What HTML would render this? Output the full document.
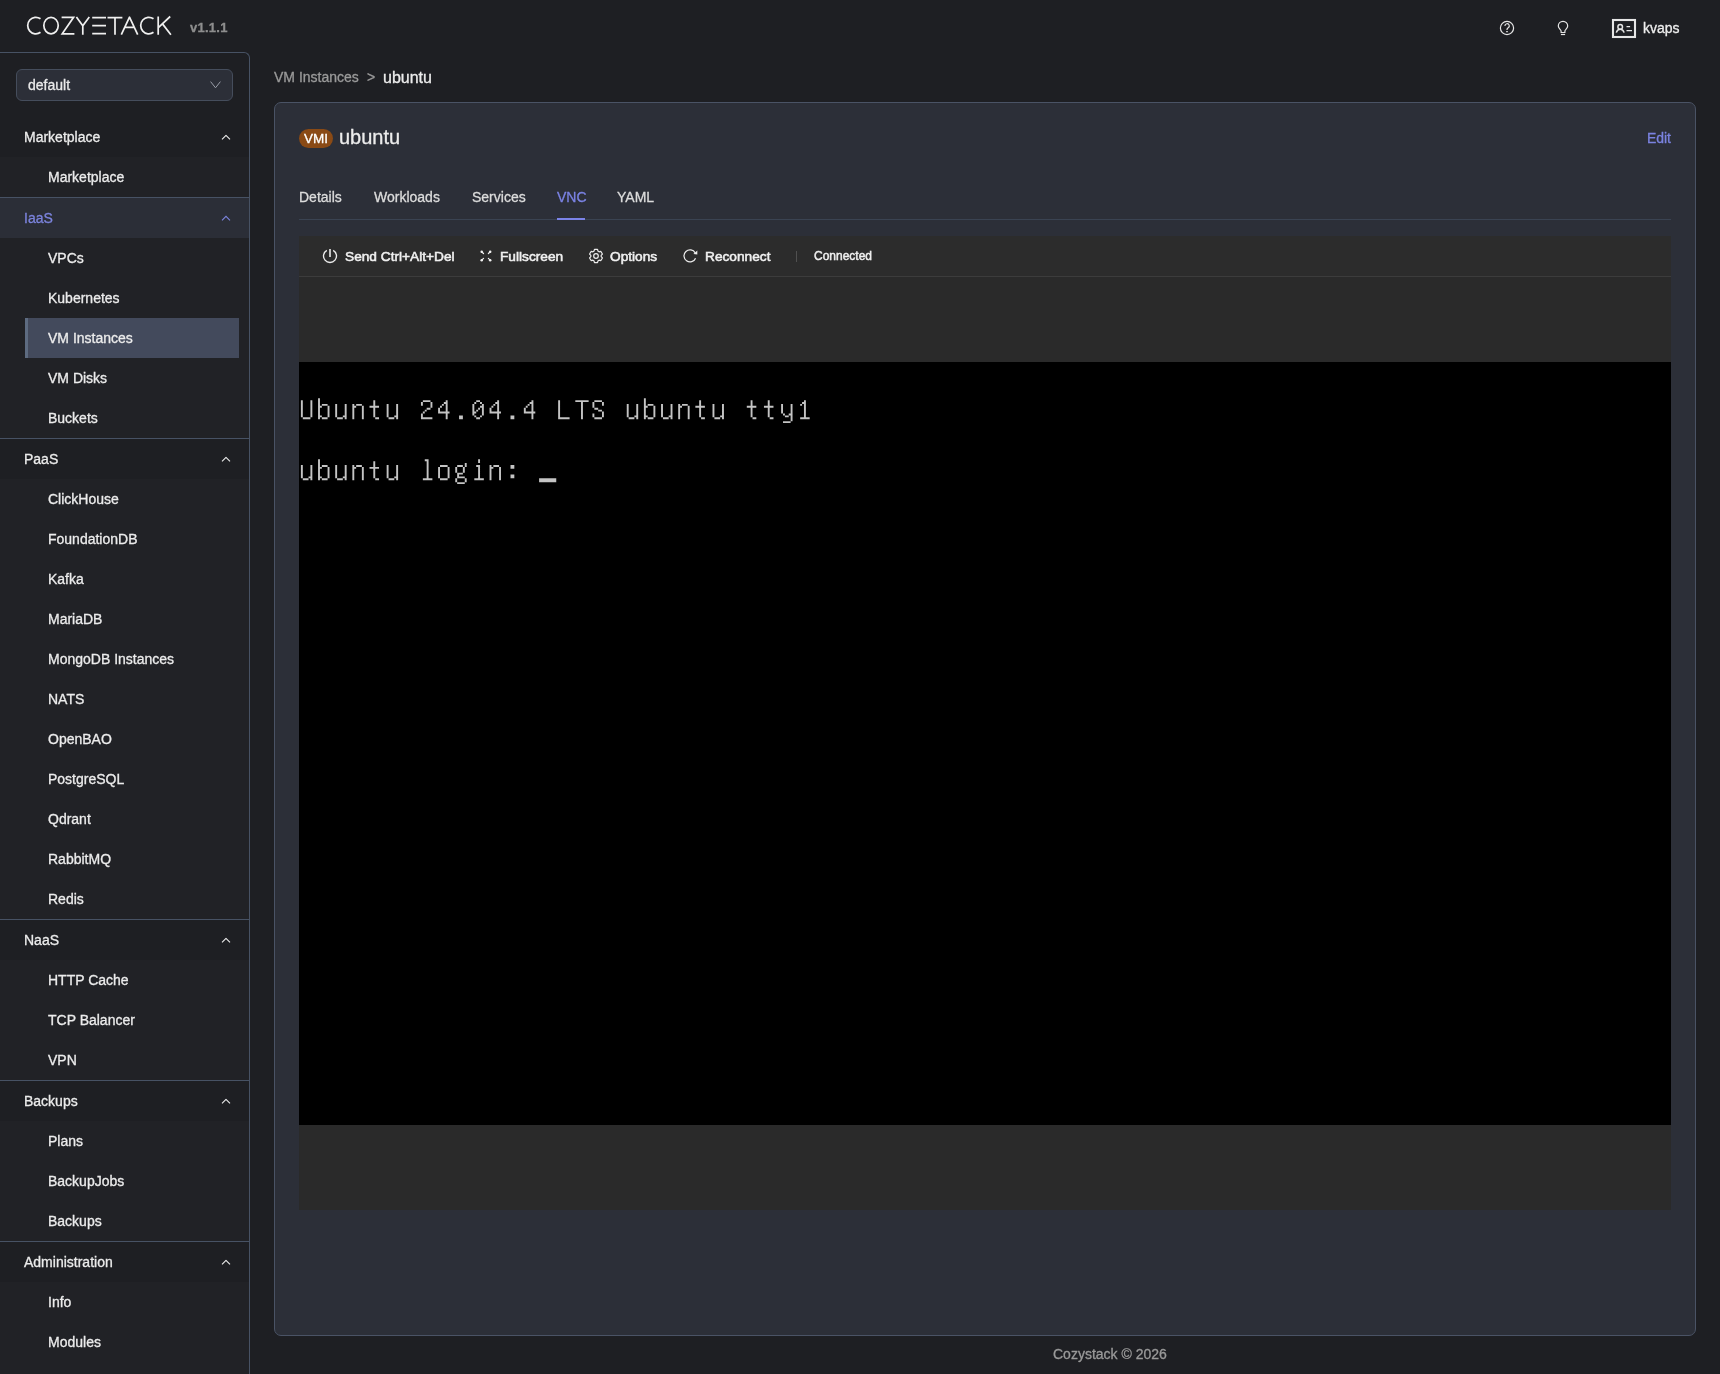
<!DOCTYPE html>
<html><head><meta charset="utf-8">
<style>
*{box-sizing:border-box;margin:0;padding:0}
html,body{width:1720px;height:1374px;overflow:hidden;background:#1e1f23;font-family:"Liberation Sans",sans-serif;color:#e8e8e8}
body{will-change:transform;-webkit-text-stroke-width:0.3px}
.abs{position:absolute}
#logo{position:absolute;left:20px;top:10px}
#ver{position:absolute;left:190px;top:19.7px;font-size:13px;font-weight:bold;color:#8e8e8e;letter-spacing:0.25px}
#nav{position:absolute;left:0;top:64px;width:249px}
#sidebar{position:absolute;left:0;top:52px;width:250px;height:1340px;border-top:1px solid #475264;border-right:1px solid #475264;border-top-right-radius:6px;background:#1e1f23;overflow:hidden}
#sel{position:absolute;left:16px;top:16px;width:217px;height:32px;border:1px solid #454d5c;border-radius:6px;background:#2c2f38;font-size:14px;color:#eaeaea;padding-left:11px;line-height:30px}
#sel svg{position:absolute;right:11px;top:11px}
.sec{position:absolute;left:0;width:249px}
.hdr{height:40px;position:relative;font-size:14px;color:#ececec;line-height:40px;padding-left:24px;background:#1e1f23}
.hdr svg{position:absolute;left:221px;top:17px}
.hdr.on{background:#2b2e37;color:#7b83dc}
.items{background:#212226}
.it{height:40px;line-height:40px;font-size:14px;color:#ececec;padding-left:48px;position:relative}
.it.on{background:#434a5c;margin-left:25px;margin-right:10px;padding-left:20px;border-left:3px solid #5d6b80}
.bt{border-top:1px solid #475264}
#crumb{position:absolute;left:274px;top:68.6px;font-size:14px;color:#9a9a9a}
#crumb .gt{position:absolute;left:93px;top:0}
#crumb .cur{position:absolute;left:109px;top:0px;font-size:16px;color:#ececec}
#card{position:absolute;left:274px;top:102px;width:1422px;height:1234px;background:#2c2f38;border:1px solid #4a5365;border-radius:7px}
#badge{position:absolute;left:24px;top:26px;width:34px;height:19px;border-radius:10px;background:#8a4a15;color:#fff;font-size:13.5px;line-height:19px;text-align:center}
#title{position:absolute;left:64px;top:23px;font-size:20px;color:#ececec}
#edit{position:absolute;right:24px;top:27px;font-size:14px;color:#7b83e0}
#tabs{position:absolute;left:24px;top:116px;width:1372px;height:1px;background:#3a4352}
.tab{position:absolute;top:-30px;font-size:14px;color:#dcdcdc}
.tab.on{color:#7b83e4}
.tab.on::after{content:"";position:absolute;left:0;width:28px;top:29px;height:2px;background:#7b83e8}
#vnc{position:absolute;left:24px;top:133px;width:1372px;height:974px;background:#2a2a2a}
#tb{position:absolute;left:0;top:0;width:1372px;height:41px;border-bottom:1px solid #3c3c3c;background:#2c2c2c}
.tbi{position:absolute;top:1px;height:40px;line-height:40px;font-size:13.7px;color:#f0f0f0;-webkit-text-stroke-width:0.55px}
.tbi svg{position:absolute;top:12px}
#term{position:absolute;left:0;top:126px;width:1372px;height:763px;background:#000;overflow:hidden}
.tl{position:absolute;left:0;font-family:"Liberation Mono",monospace;font-size:28.6px;color:#d0d0d0;white-space:pre;transform-origin:0 0}
#footer{position:absolute;left:1053px;top:1346px;font-size:14px;color:#9a9a9a}
#hdr-r{position:absolute;top:0;right:0}
</style></head><body>

<svg id="logo" width="160" height="30" viewBox="20 10 160 30" fill="none" stroke="#f0f0f0" stroke-width="1.72">
<path d="M40.5 18.8A8.1 8.28 0 1 0 40.5 32.3"/>
<ellipse cx="51.03" cy="25.55" rx="7.2" ry="8.28"/>
<path d="M61.6 17.3H73.6L62.2 33.8H74.4"/>
<path d="M76.4 17L82.8 25.8L89.3 17M82.8 25.8V34.7"/>
<path d="M92.2 17.66H106M92.2 25.7H106M92.2 33.6H106"/>
<path d="M107.5 17.66H122.4M115 17.66V34.7"/>
<path stroke-linejoin="round" d="M121.3 34.7L129.5 17.2L137.7 34.7M124.65 27.3H134.35"/>
<path d="M153.5 18.8A8.1 8.28 0 1 0 153.5 32.3"/>
<path d="M158.2 16.4V34.7M170.2 16.5L158.6 27.4M162.5 23.9L170.9 34.7"/>
</svg>
<div id="ver">v1.1.1</div>

<!-- header right -->
<svg class="abs" style="left:1490px;top:10px" width="150" height="36" viewBox="1490 10 150 36" fill="none" stroke="#e6e6e6">
<circle cx="1507" cy="28" r="6.6" stroke-width="1.2"/>
<path d="M1504.9 25.9a2.2 2.2 0 1 1 3.3 1.9c-.6.4-1.2.8-1.2 1.8v.3" stroke-width="1.2"/>
<path d="M1506.2 31.6h1.6" stroke-width="1.1"/>
<path d="M1561.1 32.5v-1.5c0-1.2-2.8-2.6-2.8-5a4.7 4.7 0 0 1 9.4 0c0 2.4-2.8 3.8-2.8 5v1.5z" stroke-width="1.2"/>
<path d="M1560.9 34.5h4.2" stroke-width="1.2"/>
<rect x="1613" y="20" width="22" height="17" stroke-width="2.1"/>
<circle cx="1620.2" cy="26.9" r="2.3" stroke-width="1.5"/>
<path d="M1616.3 32.6c.6-2.2 2-3.3 3.9-3.3s3.3 1.1 3.9 3.3" stroke-width="1.5"/>
<path d="M1626.5 26.6h3.6M1626.5 30.6h5.5" stroke-width="1.4"/>
</svg>
<div class="abs" style="left:1643px;top:20px;font-size:14px;color:#eeeeee">kvaps</div>

<div id="sidebar">
  <div id="sel">default<svg width="11" height="8" viewBox="0 0 11 8" fill="none" stroke="#9a9ea8" stroke-width="1"><path d="M.6 .6l4.9 6.2 4.9-6.2"/></svg></div>
  <div id="nav">
<div class="sec2">
<div class="hdr">Marketplace<svg width="10" height="7" viewBox="0 0 10 7" fill="none" stroke-width="1.1" stroke-linejoin="round" stroke="#ececec"><path d="M1 5.3l4-4 4 4"/></svg></div>
<div class="items">
<div class="it">Marketplace</div>
</div></div>
<div class="sec2 bt">
<div class="hdr on">IaaS<svg width="10" height="7" viewBox="0 0 10 7" fill="none" stroke-width="1.1" stroke="#7b83dc"><path d="M1 5.3l4-4 4 4"/></svg></div>
<div class="items">
<div class="it">VPCs</div>
<div class="it">Kubernetes</div>
<div class="it on">VM Instances</div>
<div class="it">VM Disks</div>
<div class="it">Buckets</div>
</div></div>
<div class="sec2 bt">
<div class="hdr">PaaS<svg width="10" height="7" viewBox="0 0 10 7" fill="none" stroke-width="1.1" stroke-linejoin="round" stroke="#ececec"><path d="M1 5.3l4-4 4 4"/></svg></div>
<div class="items">
<div class="it">ClickHouse</div>
<div class="it">FoundationDB</div>
<div class="it">Kafka</div>
<div class="it">MariaDB</div>
<div class="it">MongoDB Instances</div>
<div class="it">NATS</div>
<div class="it">OpenBAO</div>
<div class="it">PostgreSQL</div>
<div class="it">Qdrant</div>
<div class="it">RabbitMQ</div>
<div class="it">Redis</div>
</div></div>
<div class="sec2 bt">
<div class="hdr">NaaS<svg width="10" height="7" viewBox="0 0 10 7" fill="none" stroke-width="1.1" stroke-linejoin="round" stroke="#ececec"><path d="M1 5.3l4-4 4 4"/></svg></div>
<div class="items">
<div class="it">HTTP Cache</div>
<div class="it">TCP Balancer</div>
<div class="it">VPN</div>
</div></div>
<div class="sec2 bt">
<div class="hdr">Backups<svg width="10" height="7" viewBox="0 0 10 7" fill="none" stroke-width="1.1" stroke-linejoin="round" stroke="#ececec"><path d="M1 5.3l4-4 4 4"/></svg></div>
<div class="items">
<div class="it">Plans</div>
<div class="it">BackupJobs</div>
<div class="it">Backups</div>
</div></div>
<div class="sec2 bt">
<div class="hdr">Administration<svg width="10" height="7" viewBox="0 0 10 7" fill="none" stroke-width="1.1" stroke-linejoin="round" stroke="#ececec"><path d="M1 5.3l4-4 4 4"/></svg></div>
<div class="items">
<div class="it">Info</div>
<div class="it">Modules</div><div class="it"></div>
</div></div>
</div>
</div>

<div id="crumb">VM Instances<span class="gt">&gt;</span><span class="cur">ubuntu</span></div>

<div id="card">
  <div id="badge">VMI</div>
  <div id="title">ubuntu</div>
  <div id="edit">Edit</div>
  <div id="tabs">
    <span class="tab" style="left:0">Details</span>
    <span class="tab" style="left:75px">Workloads</span>
    <span class="tab" style="left:173px">Services</span>
    <span class="tab on" style="left:258px">VNC</span>
    <span class="tab" style="left:318px">YAML</span>
  </div>
  <div id="vnc">
    <div id="tb">
  <svg class="abs" style="left:17px;top:7px" width="28" height="24" viewBox="316 243 28 24" fill="none" stroke="#ececec" stroke-width="1.35"><path d="M326.8 250.3A6.5 6.5 0 1 0 333.2 250.3"/><rect x="329" y="249" width="2" height="8" fill="#c4c4c4" stroke="none"/></svg>
  <span class="tbi" style="left:46px">Send Ctrl+Alt+Del</span>
  <svg class="abs" style="left:177px;top:7px" width="20" height="20" viewBox="476 243 20 20" fill="#f2f2f2" stroke="#f2f2f2" stroke-width="1.2" stroke-linecap="round"><path d="M481.6 251.7L483.5 253.5M490.3 251.7L488.4 253.5M481.6 260.4L483.5 258.4M490.3 260.4L488.4 258.4"/><circle cx="481.7" cy="251.8" r="1.25" stroke="none"/><circle cx="490.2" cy="251.8" r="1.25" stroke="none"/><circle cx="481.7" cy="260.3" r="1.25" stroke="none"/><circle cx="490.2" cy="260.3" r="1.25" stroke="none"/></svg>
  <span class="tbi" style="left:201px">Fullscreen</span>
  <svg class="abs" style="left:285px;top:7px" width="24" height="24" viewBox="584 243 24 24" fill="none" stroke="#ececec" stroke-width="1.2" stroke-linejoin="round"><path d="M598.12 251.25L597.51 249.47L594.49 249.47L593.88 251.25A5.2 5.2 0 0 1 592.94 251.79L591.10 251.43L589.59 254.04L590.83 255.46A5.2 5.2 0 0 1 590.83 256.54L589.59 257.96L591.10 260.57L592.94 260.21A5.2 5.2 0 0 1 593.88 260.75L594.49 262.53L597.51 262.53L598.12 260.75A5.2 5.2 0 0 1 599.06 260.21L600.90 260.57L602.41 257.96L601.17 256.54A5.2 5.2 0 0 1 601.17 255.46L602.41 254.04L600.90 251.43L599.06 251.79A5.2 5.2 0 0 1 598.12 251.25Z"/><circle cx="596" cy="256" r="2.3"/></svg>
  <span class="tbi" style="left:311px">Options</span>
  <svg class="abs" style="left:379px;top:7px" width="24" height="24" viewBox="678 243 24 24" fill="none" stroke="#ececec" stroke-width="1.25"><path d="M695.56 258.15A6 6 0 1 1 695.20 252.90"/><path d="M697.3 250.5V254.4L693.4 253.9Z" fill="#f0f0f0" stroke="none"/></svg>
  <span class="tbi" style="left:406px">Reconnect</span>
  <div class="abs" style="left:497px;top:15px;width:1px;height:11px;background:#505050"></div>
  <span class="tbi" style="left:515px;top:0;font-size:12px;-webkit-text-stroke-width:0.45px">Connected</span>
</div>
    <div id="term">
      <svg class="abs" style="left:0;top:0" width="1372" height="763" viewBox="0 0 720 400" preserveAspectRatio="none"><path fill="#c4c4c4" d="M1 20h1v1h-1zM6 20h1v1h-1zM1 21h1v1h-1zM6 21h1v1h-1zM1 22h1v1h-1zM6 22h1v1h-1zM1 23h1v1h-1zM6 23h1v1h-1zM1 24h1v1h-1zM6 24h1v1h-1zM1 25h1v1h-1zM6 25h1v1h-1zM1 26h1v1h-1zM6 26h1v1h-1zM1 27h1v1h-1zM6 27h1v1h-1zM1 28h1v1h-1zM6 28h1v1h-1zM2 29h4v1h-4zM10 19h1v1h-1zM10 20h1v1h-1zM10 21h1v1h-1zM10 22h1v1h-1zM12 22h3v1h-3zM10 23h2v1h-2zM15 23h1v1h-1zM10 24h1v1h-1zM15 24h1v1h-1zM10 25h1v1h-1zM15 25h1v1h-1zM10 26h1v1h-1zM15 26h1v1h-1zM10 27h1v1h-1zM15 27h1v1h-1zM10 28h2v1h-2zM15 28h1v1h-1zM10 29h1v1h-1zM12 29h3v1h-3zM19 22h1v1h-1zM24 22h1v1h-1zM19 23h1v1h-1zM24 23h1v1h-1zM19 24h1v1h-1zM24 24h1v1h-1zM19 25h1v1h-1zM24 25h1v1h-1zM19 26h1v1h-1zM24 26h1v1h-1zM19 27h1v1h-1zM24 27h1v1h-1zM19 28h1v1h-1zM23 28h2v1h-2zM20 29h3v1h-3zM24 29h1v1h-1zM28 22h1v1h-1zM30 22h3v1h-3zM28 23h2v1h-2zM33 23h1v1h-1zM28 24h1v1h-1zM33 24h1v1h-1zM28 25h1v1h-1zM33 25h1v1h-1zM28 26h1v1h-1zM33 26h1v1h-1zM28 27h1v1h-1zM33 27h1v1h-1zM28 28h1v1h-1zM33 28h1v1h-1zM28 29h1v1h-1zM33 29h1v1h-1zM39 20h1v1h-1zM39 21h1v1h-1zM39 22h1v1h-1zM37 23h5v1h-5zM39 24h1v1h-1zM39 25h1v1h-1zM39 26h1v1h-1zM39 27h1v1h-1zM39 28h1v1h-1zM40 29h2v1h-2zM46 22h1v1h-1zM51 22h1v1h-1zM46 23h1v1h-1zM51 23h1v1h-1zM46 24h1v1h-1zM51 24h1v1h-1zM46 25h1v1h-1zM51 25h1v1h-1zM46 26h1v1h-1zM51 26h1v1h-1zM46 27h1v1h-1zM51 27h1v1h-1zM46 28h1v1h-1zM50 28h2v1h-2zM47 29h3v1h-3zM51 29h1v1h-1zM65 20h4v1h-4zM64 21h1v1h-1zM69 21h1v1h-1zM64 22h1v1h-1zM69 22h1v1h-1zM69 23h1v1h-1zM67 24h2v1h-2zM66 25h1v1h-1zM65 26h1v1h-1zM64 27h1v1h-1zM64 28h1v1h-1zM64 29h6v1h-6zM77 20h1v1h-1zM76 21h2v1h-2zM75 22h1v1h-1zM77 22h1v1h-1zM74 23h1v1h-1zM77 23h1v1h-1zM73 24h1v1h-1zM77 24h1v1h-1zM73 25h1v1h-1zM77 25h1v1h-1zM73 26h6v1h-6zM77 27h1v1h-1zM77 28h1v1h-1zM77 29h1v1h-1zM84 28h2v1h-2zM84 29h2v1h-2zM93 20h2v1h-2zM92 21h1v1h-1zM95 21h1v1h-1zM91 22h1v1h-1zM96 22h1v1h-1zM91 23h1v1h-1zM95 23h2v1h-2zM91 24h1v1h-1zM94 24h1v1h-1zM96 24h1v1h-1zM91 25h1v1h-1zM93 25h1v1h-1zM96 25h1v1h-1zM91 26h2v1h-2zM96 26h1v1h-1zM91 27h1v1h-1zM96 27h1v1h-1zM92 28h1v1h-1zM95 28h1v1h-1zM93 29h2v1h-2zM104 20h1v1h-1zM103 21h2v1h-2zM102 22h1v1h-1zM104 22h1v1h-1zM101 23h1v1h-1zM104 23h1v1h-1zM100 24h1v1h-1zM104 24h1v1h-1zM100 25h1v1h-1zM104 25h1v1h-1zM100 26h6v1h-6zM104 27h1v1h-1zM104 28h1v1h-1zM104 29h1v1h-1zM111 28h2v1h-2zM111 29h2v1h-2zM122 20h1v1h-1zM121 21h2v1h-2zM120 22h1v1h-1zM122 22h1v1h-1zM119 23h1v1h-1zM122 23h1v1h-1zM118 24h1v1h-1zM122 24h1v1h-1zM118 25h1v1h-1zM122 25h1v1h-1zM118 26h6v1h-6zM122 27h1v1h-1zM122 28h1v1h-1zM122 29h1v1h-1zM136 20h1v1h-1zM136 21h1v1h-1zM136 22h1v1h-1zM136 23h1v1h-1zM136 24h1v1h-1zM136 25h1v1h-1zM136 26h1v1h-1zM136 27h1v1h-1zM136 28h1v1h-1zM136 29h6v1h-6zM145 20h7v1h-7zM148 21h1v1h-1zM148 22h1v1h-1zM148 23h1v1h-1zM148 24h1v1h-1zM148 25h1v1h-1zM148 26h1v1h-1zM148 27h1v1h-1zM148 28h1v1h-1zM148 29h1v1h-1zM155 20h4v1h-4zM154 21h1v1h-1zM159 21h1v1h-1zM154 22h1v1h-1zM159 22h1v1h-1zM154 23h1v1h-1zM155 24h2v1h-2zM157 25h2v1h-2zM159 26h1v1h-1zM154 27h1v1h-1zM159 27h1v1h-1zM154 28h1v1h-1zM159 28h1v1h-1zM155 29h4v1h-4zM172 22h1v1h-1zM177 22h1v1h-1zM172 23h1v1h-1zM177 23h1v1h-1zM172 24h1v1h-1zM177 24h1v1h-1zM172 25h1v1h-1zM177 25h1v1h-1zM172 26h1v1h-1zM177 26h1v1h-1zM172 27h1v1h-1zM177 27h1v1h-1zM172 28h1v1h-1zM176 28h2v1h-2zM173 29h3v1h-3zM177 29h1v1h-1zM181 19h1v1h-1zM181 20h1v1h-1zM181 21h1v1h-1zM181 22h1v1h-1zM183 22h3v1h-3zM181 23h2v1h-2zM186 23h1v1h-1zM181 24h1v1h-1zM186 24h1v1h-1zM181 25h1v1h-1zM186 25h1v1h-1zM181 26h1v1h-1zM186 26h1v1h-1zM181 27h1v1h-1zM186 27h1v1h-1zM181 28h2v1h-2zM186 28h1v1h-1zM181 29h1v1h-1zM183 29h3v1h-3zM190 22h1v1h-1zM195 22h1v1h-1zM190 23h1v1h-1zM195 23h1v1h-1zM190 24h1v1h-1zM195 24h1v1h-1zM190 25h1v1h-1zM195 25h1v1h-1zM190 26h1v1h-1zM195 26h1v1h-1zM190 27h1v1h-1zM195 27h1v1h-1zM190 28h1v1h-1zM194 28h2v1h-2zM191 29h3v1h-3zM195 29h1v1h-1zM199 22h1v1h-1zM201 22h3v1h-3zM199 23h2v1h-2zM204 23h1v1h-1zM199 24h1v1h-1zM204 24h1v1h-1zM199 25h1v1h-1zM204 25h1v1h-1zM199 26h1v1h-1zM204 26h1v1h-1zM199 27h1v1h-1zM204 27h1v1h-1zM199 28h1v1h-1zM204 28h1v1h-1zM199 29h1v1h-1zM204 29h1v1h-1zM210 20h1v1h-1zM210 21h1v1h-1zM210 22h1v1h-1zM208 23h5v1h-5zM210 24h1v1h-1zM210 25h1v1h-1zM210 26h1v1h-1zM210 27h1v1h-1zM210 28h1v1h-1zM211 29h2v1h-2zM217 22h1v1h-1zM222 22h1v1h-1zM217 23h1v1h-1zM222 23h1v1h-1zM217 24h1v1h-1zM222 24h1v1h-1zM217 25h1v1h-1zM222 25h1v1h-1zM217 26h1v1h-1zM222 26h1v1h-1zM217 27h1v1h-1zM222 27h1v1h-1zM217 28h1v1h-1zM221 28h2v1h-2zM218 29h3v1h-3zM222 29h1v1h-1zM237 20h1v1h-1zM237 21h1v1h-1zM237 22h1v1h-1zM235 23h5v1h-5zM237 24h1v1h-1zM237 25h1v1h-1zM237 26h1v1h-1zM237 27h1v1h-1zM237 28h1v1h-1zM238 29h2v1h-2zM246 20h1v1h-1zM246 21h1v1h-1zM246 22h1v1h-1zM244 23h5v1h-5zM246 24h1v1h-1zM246 25h1v1h-1zM246 26h1v1h-1zM246 27h1v1h-1zM246 28h1v1h-1zM247 29h2v1h-2zM253 22h1v1h-1zM258 22h1v1h-1zM253 23h1v1h-1zM258 23h1v1h-1zM253 24h1v1h-1zM258 24h1v1h-1zM253 25h1v1h-1zM258 25h1v1h-1zM253 26h1v1h-1zM258 26h1v1h-1zM254 27h1v1h-1zM257 27h2v1h-2zM255 28h2v1h-2zM258 28h1v1h-1zM258 29h1v1h-1zM258 30h1v1h-1zM254 31h4v1h-4zM265 20h1v1h-1zM264 21h2v1h-2zM263 22h1v1h-1zM265 22h1v1h-1zM265 23h1v1h-1zM265 24h1v1h-1zM265 25h1v1h-1zM265 26h1v1h-1zM265 27h1v1h-1zM265 28h1v1h-1zM263 29h5v1h-5zM1 54h1v1h-1zM6 54h1v1h-1zM1 55h1v1h-1zM6 55h1v1h-1zM1 56h1v1h-1zM6 56h1v1h-1zM1 57h1v1h-1zM6 57h1v1h-1zM1 58h1v1h-1zM6 58h1v1h-1zM1 59h1v1h-1zM6 59h1v1h-1zM1 60h1v1h-1zM5 60h2v1h-2zM2 61h3v1h-3zM6 61h1v1h-1zM10 51h1v1h-1zM10 52h1v1h-1zM10 53h1v1h-1zM10 54h1v1h-1zM12 54h3v1h-3zM10 55h2v1h-2zM15 55h1v1h-1zM10 56h1v1h-1zM15 56h1v1h-1zM10 57h1v1h-1zM15 57h1v1h-1zM10 58h1v1h-1zM15 58h1v1h-1zM10 59h1v1h-1zM15 59h1v1h-1zM10 60h2v1h-2zM15 60h1v1h-1zM10 61h1v1h-1zM12 61h3v1h-3zM19 54h1v1h-1zM24 54h1v1h-1zM19 55h1v1h-1zM24 55h1v1h-1zM19 56h1v1h-1zM24 56h1v1h-1zM19 57h1v1h-1zM24 57h1v1h-1zM19 58h1v1h-1zM24 58h1v1h-1zM19 59h1v1h-1zM24 59h1v1h-1zM19 60h1v1h-1zM23 60h2v1h-2zM20 61h3v1h-3zM24 61h1v1h-1zM28 54h1v1h-1zM30 54h3v1h-3zM28 55h2v1h-2zM33 55h1v1h-1zM28 56h1v1h-1zM33 56h1v1h-1zM28 57h1v1h-1zM33 57h1v1h-1zM28 58h1v1h-1zM33 58h1v1h-1zM28 59h1v1h-1zM33 59h1v1h-1zM28 60h1v1h-1zM33 60h1v1h-1zM28 61h1v1h-1zM33 61h1v1h-1zM39 52h1v1h-1zM39 53h1v1h-1zM39 54h1v1h-1zM37 55h5v1h-5zM39 56h1v1h-1zM39 57h1v1h-1zM39 58h1v1h-1zM39 59h1v1h-1zM39 60h1v1h-1zM40 61h2v1h-2zM46 54h1v1h-1zM51 54h1v1h-1zM46 55h1v1h-1zM51 55h1v1h-1zM46 56h1v1h-1zM51 56h1v1h-1zM46 57h1v1h-1zM51 57h1v1h-1zM46 58h1v1h-1zM51 58h1v1h-1zM46 59h1v1h-1zM51 59h1v1h-1zM46 60h1v1h-1zM50 60h2v1h-2zM47 61h3v1h-3zM51 61h1v1h-1zM66 51h2v1h-2zM67 52h1v1h-1zM67 53h1v1h-1zM67 54h1v1h-1zM67 55h1v1h-1zM67 56h1v1h-1zM67 57h1v1h-1zM67 58h1v1h-1zM67 59h1v1h-1zM67 60h1v1h-1zM65 61h5v1h-5zM74 54h4v1h-4zM73 55h1v1h-1zM78 55h1v1h-1zM73 56h1v1h-1zM78 56h1v1h-1zM73 57h1v1h-1zM78 57h1v1h-1zM73 58h1v1h-1zM78 58h1v1h-1zM73 59h1v1h-1zM78 59h1v1h-1zM73 60h1v1h-1zM78 60h1v1h-1zM74 61h4v1h-4zM87 53h1v1h-1zM83 54h3v1h-3zM87 54h1v1h-1zM82 55h1v1h-1zM86 55h1v1h-1zM82 56h1v1h-1zM86 56h1v1h-1zM82 57h1v1h-1zM86 57h1v1h-1zM83 58h3v1h-3zM83 59h1v1h-1zM83 60h4v1h-4zM82 61h1v1h-1zM87 61h1v1h-1zM82 62h1v1h-1zM87 62h1v1h-1zM83 63h4v1h-4zM94 51h1v1h-1zM94 52h1v1h-1zM93 54h2v1h-2zM94 55h1v1h-1zM94 56h1v1h-1zM94 57h1v1h-1zM94 58h1v1h-1zM94 59h1v1h-1zM94 60h1v1h-1zM92 61h5v1h-5zM100 54h1v1h-1zM102 54h3v1h-3zM100 55h2v1h-2zM105 55h1v1h-1zM100 56h1v1h-1zM105 56h1v1h-1zM100 57h1v1h-1zM105 57h1v1h-1zM100 58h1v1h-1zM105 58h1v1h-1zM100 59h1v1h-1zM105 59h1v1h-1zM100 60h1v1h-1zM105 60h1v1h-1zM100 61h1v1h-1zM105 61h1v1h-1zM111 54h2v1h-2zM111 55h2v1h-2zM111 59h2v1h-2zM111 60h2v1h-2zM126 61h9v1h-9zM126 62h9v1h-9z"/></svg>
    </div>
  </div>
</div>

<div id="footer">Cozystack © 2026</div>
</body></html>
